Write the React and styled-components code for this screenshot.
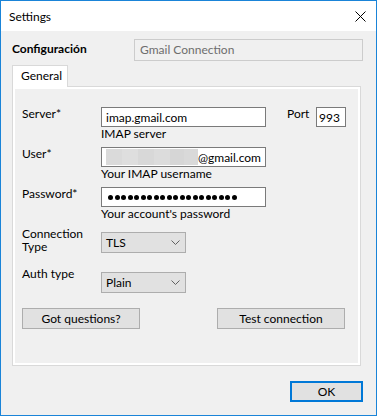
import styled, { createGlobalStyle } from 'styled-components';

const GlobalStyle = createGlobalStyle`
  html, body {
    margin: 0;
    padding: 0;
    background: #f0f0f0;
    overflow: hidden;
  }
  * {
    box-sizing: border-box;
  }
`;

// Dialog frame
const Window = styled.div`
  width: 377px;
  height: 416px;
  border: 1px solid #1a84d8;
  background: #f0f0f0;
  display: flex;
  flex-direction: column;
  font-family: Lato, "Liberation Sans", sans-serif;
  font-size: 12px;
  color: #000;
`;

const TitleBar = styled.div`
  height: 30px;
  background: #fff;
  display: flex;
  align-items: center;
  justify-content: space-between;
  padding: 0 10px 0 8px;
`;

const Title = styled.span`
  font-size: 12px;
`;

const Body = styled.div`
  flex: 1;
  display: flex;
  flex-direction: column;
  padding: 8px 0 0 11px;
`;

const Header = styled.div`
  display: flex;
  align-items: flex-start;
`;

const HeaderLabel = styled.div`
  width: 122px;
  font-weight: bold;
  line-height: 14px;
  padding-top: 3px;
`;

const NameBox = styled.div`
  width: 229px;
  height: 22px;
  border: 1px solid #cccccc;
  background: #f0f0f0;
  color: #6d6d6d;
  padding-left: 5px;
  line-height: 19px;
`;

const TabStrip = styled.div`
  display: flex;
  margin-top: 4px;
  position: relative;
  z-index: 1;
`;

const Tab = styled.div`
  width: 56px;
  height: 22px;
  background: #fff;
  border: 1px solid #d9d9d9;
  border-bottom: none;
  padding-left: 8px;
  line-height: 19px;
  margin-bottom: -1px;
`;

const Panel = styled.div`
  width: 349px;
  height: 280px;
  border: 1px solid #d9d9d9;
  box-shadow: inset 0 0 0 2px #fff;
  background: #f0f0f0;
  padding: 20px 15px 0 9px;
  display: flex;
  flex-direction: column;
`;

const FieldRow = styled.div`
  display: grid;
  grid-template-columns: 79px auto;
  margin-top: ${p => p.$top || 0}px;
`;

const Label = styled.div`
  line-height: 14px;
  max-width: 72px;
  margin-top: ${p => p.$shift || 0}px;
  line-height: ${p => (p.$tight ? 13 : 14)}px;
`;

const FieldCol = styled.div`
  display: flex;
  flex-direction: column;
  align-items: flex-start;
`;

const InputLine = styled.div`
  display: flex;
  align-items: flex-start;
`;

const TextBox = styled.div`
  width: ${p => p.$w || 165}px;
  height: 20px;
  border: 1px solid #7a7a7a;
  background: #fff;
  padding-left: ${p => p.$pad ?? 4}px;
  line-height: 17px;
  display: flex;
  align-items: center;
  white-space: nowrap;
  overflow: hidden;
`;

const Hidden = styled.span`
  width: 92px;
  height: 16px;
  background: linear-gradient(
    to right,
    #dadada 0 16px,
    #dedede 16px 32px,
    #d8d8d8 32px 48px,
    #dcdcdc 48px 64px,
    #d6d6d6 64px 78px,
    #d9d9d9 78px 92px
  );
`;

const Dots = styled.div`
  display: flex;
  gap: 1.5px;
  padding-left: 2px;
`;

const Dot = styled.span`
  width: 5px;
  height: 5px;
  border-radius: 50%;
  background: #000;
`;

const PortLabel = styled.span`
  margin-left: 21px;
  width: 29px;
  line-height: 14px;
`;

const Hint = styled.div`
  line-height: 14px;
`;

const Select = styled.div`
  width: 85px;
  height: 21px;
  border: 1px solid #adadad;
  background: #e1e1e1;
  display: flex;
  align-items: center;
  justify-content: space-between;
  padding: 0 5px 0 4px;
`;

const ButtonRow = styled.div`
  display: flex;
  justify-content: space-between;
  margin-top: 15px;
`;

const Button = styled.div`
  width: ${p => p.$w}px;
  height: 21px;
  border: 1px solid #adadad;
  background: #e1e1e1;
  display: flex;
  align-items: center;
  justify-content: center;
`;

const Footer = styled.div`
  display: flex;
  justify-content: flex-end;
  padding-right: 13px;
  margin-top: 15px;
`;

const OkButton = styled(Button)`
  border: 2px solid #0078d7;
  height: 21px;
`;

const CloseIcon = () => (
  <svg width="11" height="11" viewBox="0 0 11 11">
    <path d="M0.5 0.5 L10.5 10.5 M10.5 0.5 L0.5 10.5" stroke="#000" strokeWidth="1" fill="none" />
  </svg>
);

const Chevron = () => (
  <svg width="9" height="5" viewBox="0 0 9 5">
    <path d="M0.5 0.5 L4.5 4.5 L8.5 0.5" stroke="#606060" strokeWidth="1" fill="none" />
  </svg>
);

export default function App() {
  return (
    <>
      <GlobalStyle />
      <Window>
        <TitleBar>
          <Title>Settings</Title>
          <CloseIcon />
        </TitleBar>
        <Body>
          <Header>
            <HeaderLabel>Configuración</HeaderLabel>
            <NameBox>Gmail Connection</NameBox>
          </Header>

          <TabStrip>
            <Tab>General</Tab>
          </TabStrip>

          <Panel>
            <FieldRow>
              <Label>Server*</Label>
              <FieldCol>
                <InputLine>
                  <TextBox>imap.gmail.com</TextBox>
                  <PortLabel>Port</PortLabel>
                  <TextBox $w={30} $pad={2}>993</TextBox>
                </InputLine>
                <Hint>IMAP server</Hint>
              </FieldCol>
            </FieldRow>

            <FieldRow $top={6}>
              <Label>User*</Label>
              <FieldCol>
                <TextBox>
                  <Hidden />
                  @gmail.com
                </TextBox>
                <Hint>Your IMAP username</Hint>
              </FieldCol>
            </FieldRow>

            <FieldRow $top={6}>
              <Label>Password*</Label>
              <FieldCol>
                <TextBox>
                  <Dots>
                    {Array.from({ length: 20 }).map((_, i) => (
                      <Dot key={i} />
                    ))}
                  </Dots>
                </TextBox>
                <Hint>Your account's password</Hint>
              </FieldCol>
            </FieldRow>

            <FieldRow $top={11}>
              <Label $shift={-5} $tight>Connection Type</Label>
              <FieldCol>
                <Select>
                  <span>TLS</span>
                  <Chevron />
                </Select>
              </FieldCol>
            </FieldRow>

            <FieldRow $top={19}>
              <Label $shift={-5}>Auth type</Label>
              <FieldCol>
                <Select>
                  <span>Plain</span>
                  <Chevron />
                </Select>
              </FieldCol>
            </FieldRow>

            <ButtonRow>
              <Button $w={118}>Got questions?</Button>
              <Button $w={128}>Test connection</Button>
            </ButtonRow>
          </Panel>

          <Footer>
            <OkButton $w={73}>OK</OkButton>
          </Footer>
        </Body>
      </Window>
    </>
  );
}
